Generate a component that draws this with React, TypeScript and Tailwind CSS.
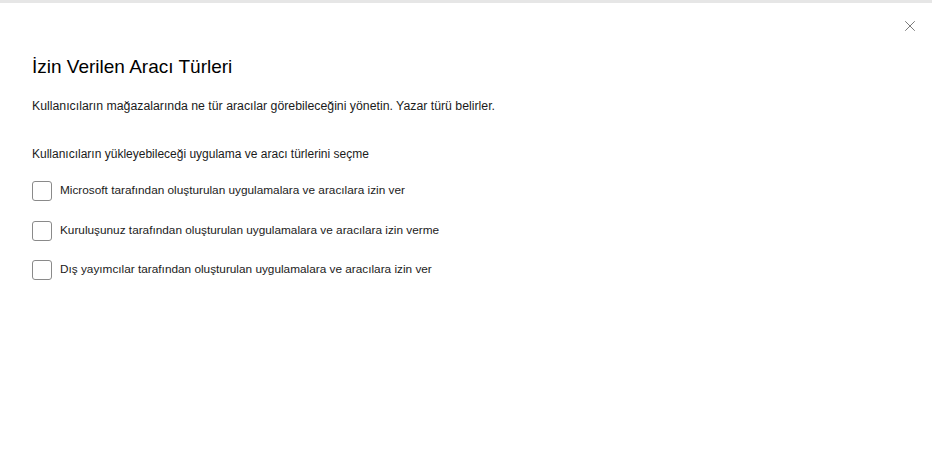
import { X } from 'lucide-react'

const options = [
  'Microsoft tarafından oluşturulan uygulamalara ve aracılara izin ver',
  'Kuruluşunuz tarafından oluşturulan uygulamalara ve aracılara izin verme',
  'Dış yayımcılar tarafından oluşturulan uygulamalara ve aracılara izin ver',
]

export default function App() {
  return (
    <div
      className="w-[932px] h-[450px] bg-white text-[#1b1b1b] flex flex-col"
      style={{ fontFamily: '"Segoe UI", "Liberation Sans", Arial, sans-serif' }}
    >
      <div className="h-[3px] bg-[#e6e6e6] shrink-0" />
      <div className="flex justify-end pr-[13px] pt-[14px]">
        <button className="w-[18px] h-[18px] flex items-center justify-center text-[#5f5f5f]">
          <X size={24} strokeWidth={1.1} />
        </button>
      </div>
      <div className="px-[32px]">
        <h1 className="text-[19px] leading-[26px] mt-[19px] text-black">İzin Verilen Aracı Türleri</h1>
        <p className="text-[12.3px] leading-[18px] mt-[17px]">
          Kullanıcıların mağazalarında ne tür aracılar görebileceğini yönetin. Yazar türü belirler.
        </p>
        <p className="text-[12px] leading-[18px] mt-[30px]">
          Kullanıcıların yükleyebileceği uygulama ve aracı türlerini seçme
        </p>
        <div className="flex flex-col gap-[19.5px] mt-[18px]">
          {options.map(o => (
            <label key={o} className="flex items-center gap-[8px] text-[11.8px]">
              <span className="w-[20px] h-[20px] rounded-[3px] border border-[#8a8a8a] bg-white shrink-0" />
              <span>{o}</span>
            </label>
          ))}
        </div>
      </div>
    </div>
  )
}
